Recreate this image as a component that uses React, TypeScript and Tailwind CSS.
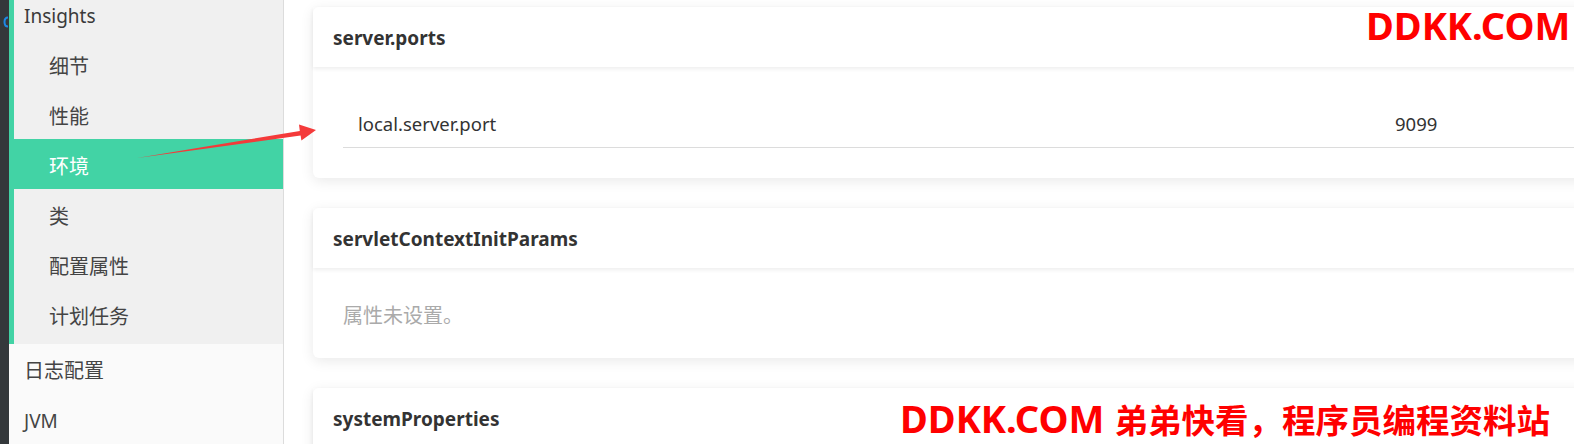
import React from 'react';

const subItems = ['细节', '性能', '环境', '类', '配置属性', '计划任务'];
const font = { fontFamily: '"Noto Sans", "Noto Sans CJK SC", sans-serif' };

const Card = ({ title, children }: { title: string; children: React.ReactNode }) => (
  <div className="bg-white rounded-md shadow-[0_3px_14px_rgba(0,0,0,0.09)] mr-[-40px]">
    <div className="h-[60px] flex items-center px-5 pt-[3px] shadow-[0_2px_4px_rgba(0,0,0,0.07)] relative">
      <span className="text-[19px] font-bold text-[#333]">{title}</span>
    </div>
    <div className="px-[30px] py-[30px]">{children}</div>
  </div>
);

const App = () => {
  return (
    <div className="relative w-[1574px] h-[444px] overflow-hidden flex bg-white" style={font}>
      {/* dark nav strip */}
      <div className="w-[9px] bg-[#34383b] relative">
        <svg className="absolute left-[3px] top-[16px]" width="6" height="12" viewBox="0 0 6 12">
          <path d="M5 1.5 C 2.5 1.5 1.5 3.5 1.5 6 C 1.5 8.5 2.5 10.5 5 10.5" stroke="#1e88e5" strokeWidth="2" fill="none" />
        </svg>
      </div>

      {/* sidebar */}
      <div className="w-[275px] border-r border-[#dcdcdc] bg-[#fafafa] flex flex-col">
        <div className="border-l-[5px] border-[#42d3a5] bg-[#f0f0f0] -mt-[10px] pb-[5px]">
          <div className="h-[49px] flex items-center pl-[10px] pt-[3px] text-[19px] text-[#3a3a3a]">Insights</div>
          {subItems.map((s) => (
            <div
              key={s}
              className={
                s === '环境'
                  ? 'h-[50px] flex items-center pl-[40px] pt-[5px] -ml-[5px] text-[20px] bg-[#42d3a5] text-white'
                  : 'h-[50px] flex items-center pl-[35px] pt-[5px] text-[20px] text-[#444]'
              }
            >
              {s}
            </div>
          ))}
        </div>
        <div className="h-[50px] flex items-center pl-[15px] pt-[4px] text-[20px] text-[#444]">日志配置</div>
        <div className="h-[50px] flex items-center pl-[15px] pt-[4px] text-[19px] text-[#444]">JVM</div>
      </div>

      {/* main content */}
      <div className="flex-1 pl-[29px] pt-[7px] flex flex-col gap-[30px]">
        <Card title="server.ports">
          <div className="grid grid-cols-[1037px_1fr] h-[51px] pt-[4px] items-center border-b border-[#dcdcdc] text-[18.5px] text-[#333]">
            <span className="pl-[15px]">local.server.port</span>
            <span className="pl-[15px]">9099</span>
          </div>
        </Card>
        <Card title="servletContextInitParams">
          <div className="h-[30px] pt-[5px] flex items-center text-[20px] text-[#aaa]">属性未设置。</div>
        </Card>
        <Card title="systemProperties">
          <div className="h-[100px]" />
        </Card>
      </div>

      {/* annotation arrow */}
      <svg className="absolute left-0 top-0 pointer-events-none" width="1574" height="444">
        <polygon points="137,158 299.8,131 299,124.6 316,130 301.4,140.4 300.6,135.5" fill="#f43a3a" />
      </svg>

      {/* watermarks */}
      <div className="absolute left-[1366px] top-[1px] text-[38px] font-bold text-[#ff0000] leading-[48px] whitespace-nowrap">
        DDKK.COM
      </div>
      <div className="absolute left-[900px] top-[395px] h-[48px] font-bold text-[#ff0000] leading-[46px] whitespace-nowrap">
        <span className="text-[38px]">DDKK.COM</span>
        <span className="text-[33.5px] ml-[10px]">弟弟快看，程序员编程资料站</span>
      </div>
    </div>
  );
};

export default App;
